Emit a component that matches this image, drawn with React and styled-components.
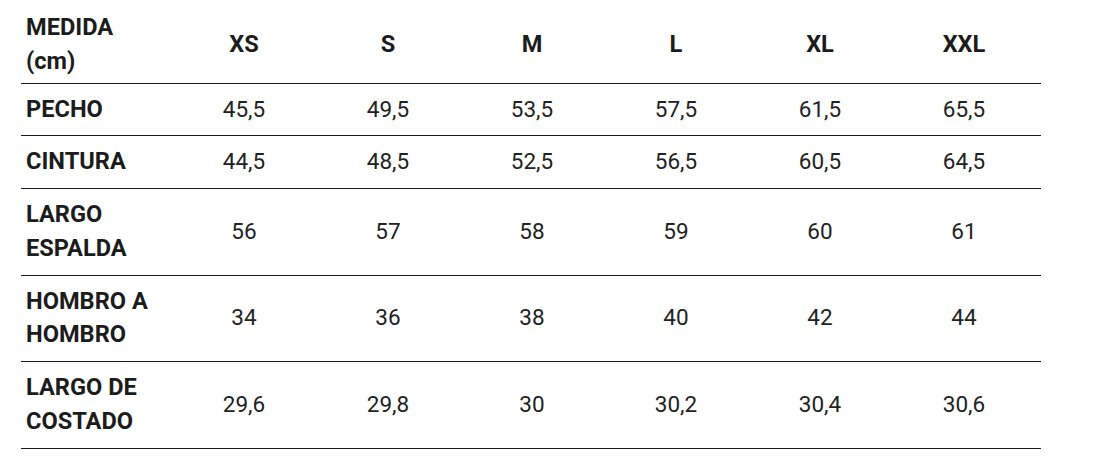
import React from "react";
import styled, { createGlobalStyle } from "styled-components";

const GlobalStyle = createGlobalStyle`
  html, body {
    margin: 0;
    padding: 0;
    background: #ffffff;
  }
  body {
    font-family: Roboto, "Liberation Sans", Arial, sans-serif;
    color: #212121;
  }
`;

const Page = styled.div`
  padding-left: 21px;
  background: #ffffff;
`;

const Table = styled.div`
  width: 1020px;
  display: flex;
  flex-direction: column;
`;

const Row = styled.div`
  display: grid;
  grid-template-columns: 151px repeat(6, 144px) 1fr;
  align-items: center;
  border-bottom: 1px solid #1c1c1c;
  padding: ${(p) => (p.$head ? "11px 0 4px" : "9px 0")};
`;

const Label = styled.div`
  padding-left: 5px;
  font-size: 23.6px;
  line-height: 33.75px;
  font-weight: 700;
  color: #1c1c1c;
`;

const HeadCell = styled.div`
  text-align: center;
  font-size: 23.6px;
  line-height: 33.75px;
  font-weight: 700;
  color: #1c1c1c;
`;

const Cell = styled.div`
  text-align: center;
  font-size: 22.5px;
  line-height: 33.75px;
  font-weight: 400;
  color: #222222;
`;

const sizes = ["XS", "S", "M", "L", "XL", "XXL"];

const rows = [
  { label: ["PECHO"], values: ["45,5", "49,5", "53,5", "57,5", "61,5", "65,5"] },
  { label: ["CINTURA"], values: ["44,5", "48,5", "52,5", "56,5", "60,5", "64,5"] },
  { label: ["LARGO", "ESPALDA"], values: ["56", "57", "58", "59", "60", "61"] },
  { label: ["HOMBRO A", "HOMBRO"], values: ["34", "36", "38", "40", "42", "44"] },
  { label: ["LARGO DE", "COSTADO"], values: ["29,6", "29,8", "30", "30,2", "30,4", "30,6"] },
];

const Lines = ({ parts }) =>
  parts.map((t, i) => (
    <React.Fragment key={i}>
      {i > 0 && <br />}
      {t}
    </React.Fragment>
  ));

export default function App() {
  return (
    <>
      <GlobalStyle />
      <Page>
        <Table>
          <Row $head>
            <Label>
              MEDIDA
              <br />
              (cm)
            </Label>
            {sizes.map((s) => (
              <HeadCell key={s}>{s}</HeadCell>
            ))}
          </Row>
          {rows.map((r) => (
            <Row key={r.label.join(" ")}>
              <Label>
                <Lines parts={r.label} />
              </Label>
              {r.values.map((v, i) => (
                <Cell key={i}>{v}</Cell>
              ))}
            </Row>
          ))}
        </Table>
      </Page>
    </>
  );
}
